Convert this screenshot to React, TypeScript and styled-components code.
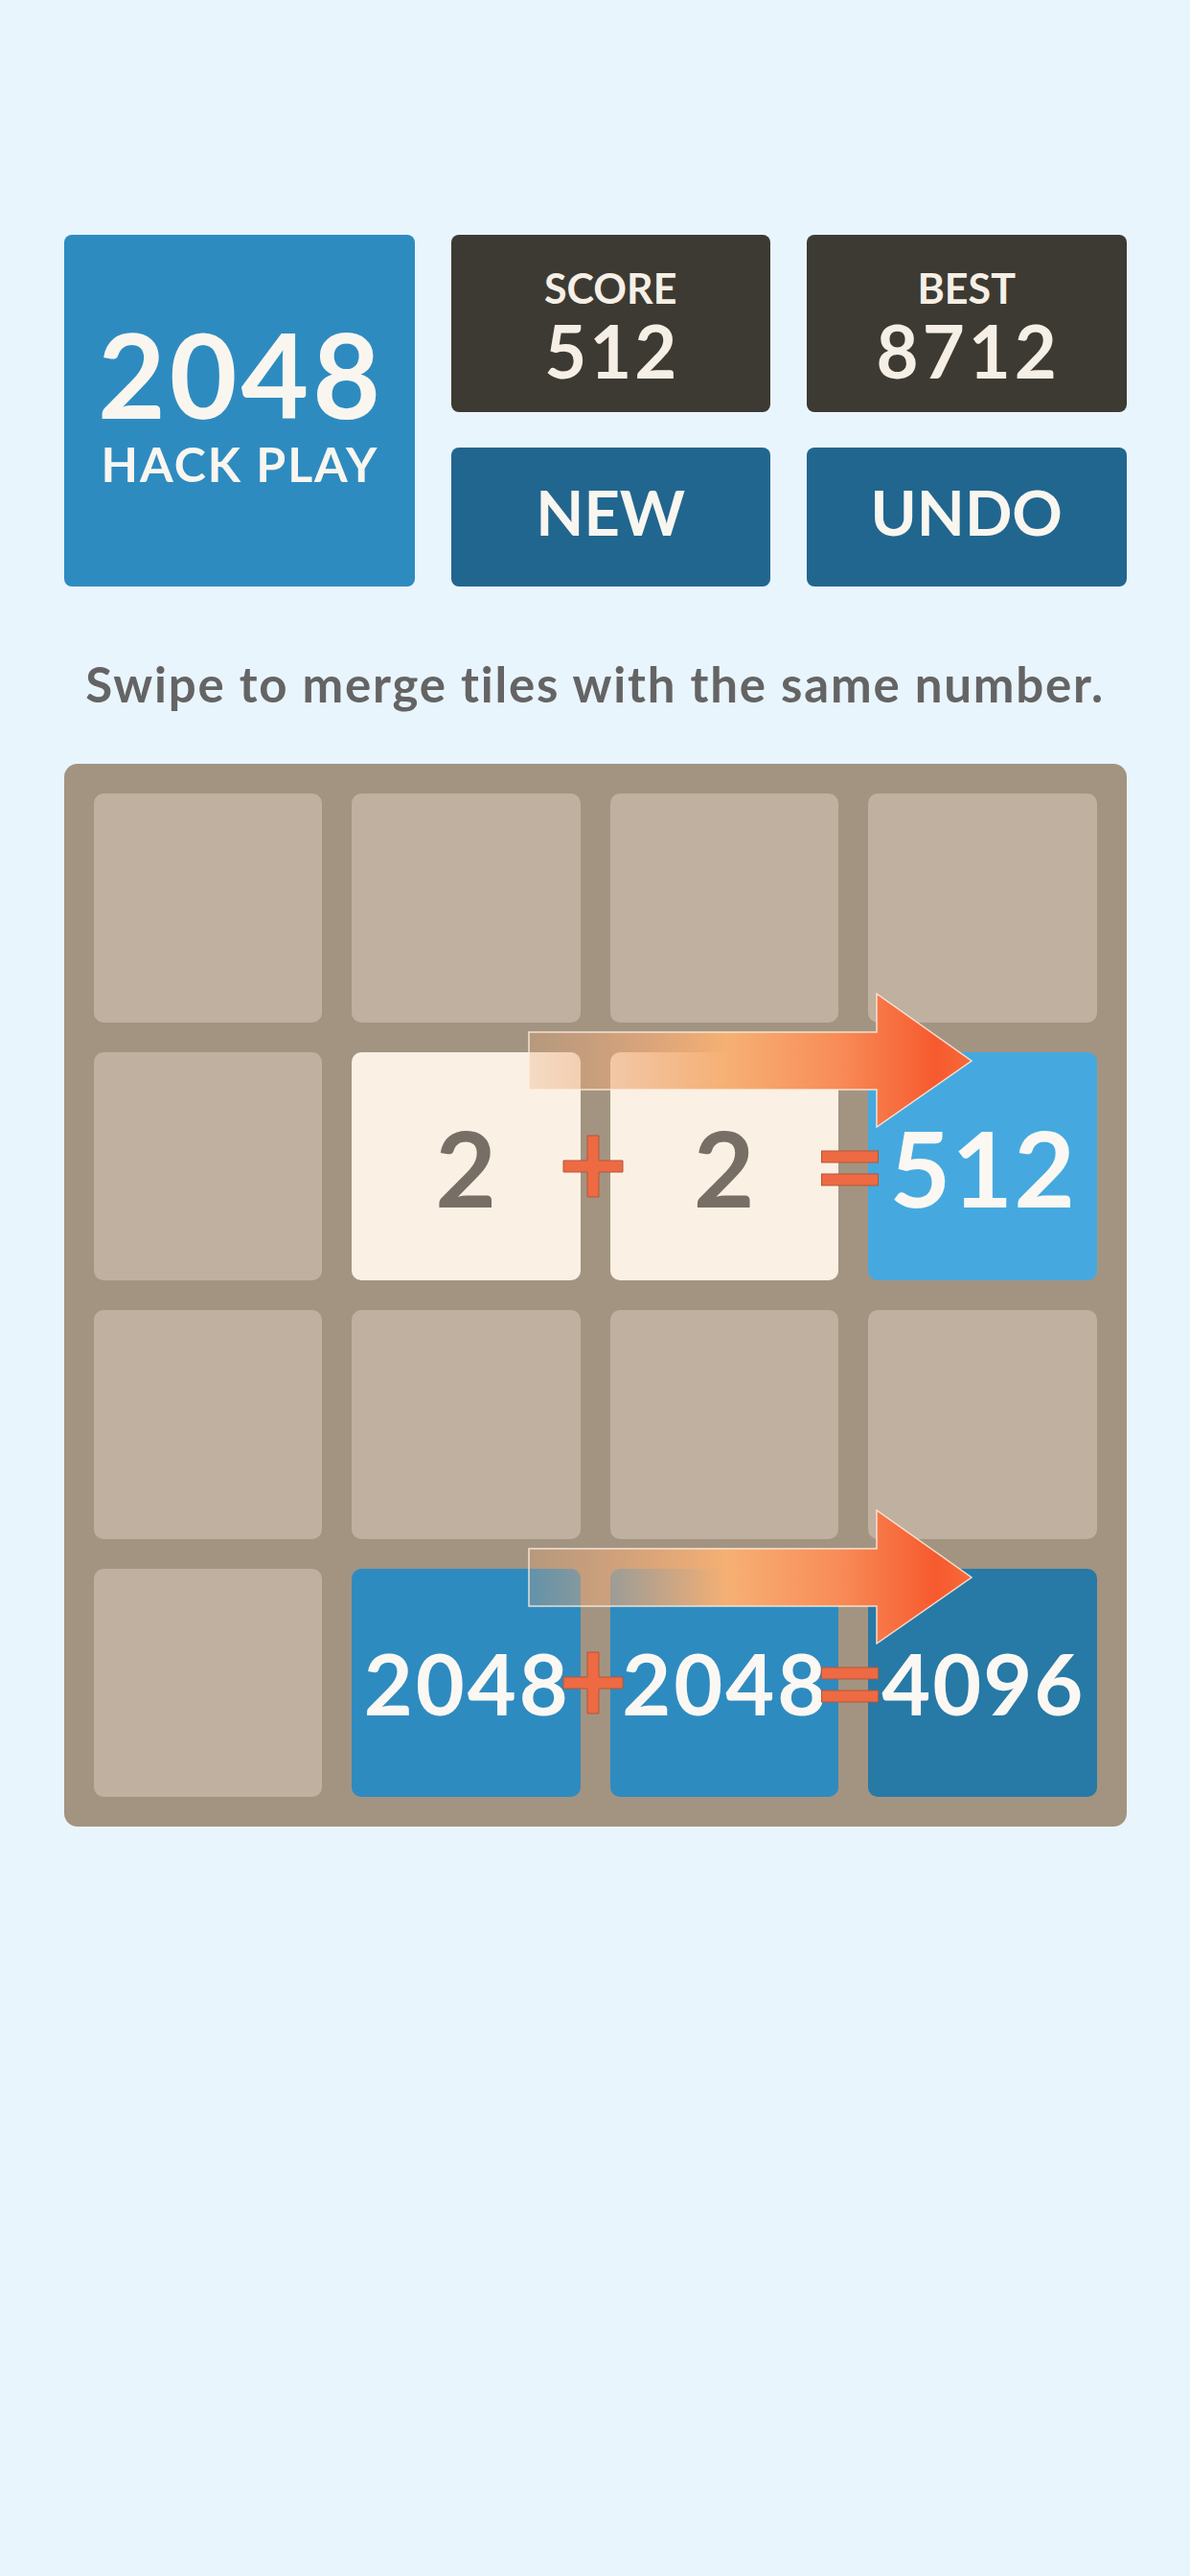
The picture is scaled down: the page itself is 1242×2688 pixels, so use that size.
import React from "react";
import styled, { createGlobalStyle } from "styled-components";

const GlobalStyle = createGlobalStyle`
  html, body {
    margin: 0;
    padding: 0;
    background: #e9f5fd;
  }
  body {
    font-family: Lato, "Open Sans", "Liberation Sans", sans-serif;
    font-weight: 700;
  }
`;

const Page = styled.div`
  width: 1109px;
  margin: 0 auto;
  padding-top: 245px;
  min-height: 2688px;
  box-sizing: border-box;
`;

const Header = styled.div`
  display: grid;
  grid-template-columns: 366px 1fr 1fr;
  grid-template-rows: 185px 145px;
  column-gap: 38px;
  row-gap: 37px;
`;

const Logo = styled.div`
  grid-row: 1 / span 2;
  background: #2e8bc0;
  border-radius: 8px;
  color: #f9f6f0;
  display: flex;
  flex-direction: column;
  align-items: center;
  justify-content: center;
  padding-bottom: 20px;
`;

const Spaced = styled.span<{ $ls: number }>`
  white-space: nowrap;
  letter-spacing: ${(p) => p.$ls}px;
  margin-right: ${(p) => -p.$ls}px;
`;

const LogoNumber = styled.div`
  font-size: 122px;
  line-height: 1;
  white-space: nowrap;
`;

const LogoSub = styled.div`
  font-size: 50px;
  line-height: 1;
  margin-top: 8px;
  white-space: nowrap;
`;

const ScoreBox = styled.div`
  background: #3c3a33;
  border-radius: 8px;
  color: #f6efe6;
  display: flex;
  flex-direction: column;
  align-items: center;
  justify-content: center;
  padding-top: 8px;
`;

const ScoreLabel = styled.div`
  font-size: 43px;
  line-height: 1;
`;

const ScoreValue = styled.div`
  font-size: 76px;
  line-height: 1;
  margin-top: 6px;
  white-space: nowrap;
`;

const ActionButton = styled.button`
  background: #21668f;
  border: none;
  border-radius: 8px;
  color: #f9f6f0;
  font-family: inherit;
  font-weight: 700;
  font-size: 65px;
  line-height: 1;
  padding: 0 0 10px;
  cursor: pointer;
`;

const Hint = styled.p`
  margin: 76px 0 0;
  text-align: center;
  font-size: 51px;
  line-height: 1;
  letter-spacing: 1.8px;
  color: #656465;
  white-space: nowrap;
`;

const Board = styled.div`
  margin-top: 58px;
  background: #a39481;
  border-radius: 14px;
  padding: 31px;
  display: grid;
  grid-template-columns: repeat(4, 1fr);
  grid-auto-rows: 238.5px;
  gap: 31px;
`;

type TileKind = "empty" | "two" | "t512" | "t2048" | "t4096";

const tileBg: Record<TileKind, string> = {
  empty: "#bfb0a0",
  two: "#faf0e4",
  t512: "#45a9df",
  t2048: "#2e8bc0",
  t4096: "#2779a6",
};

const Tile = styled.div<{ $kind: TileKind; $size?: number }>`
  position: relative;
  background: ${(p) => tileBg[p.$kind]};
  border-radius: 10px;
  display: flex;
  align-items: center;
  justify-content: center;
  color: ${(p) => (p.$kind === "two" ? "#776e65" : "#fbf8f3")};
  font-size: ${(p) => p.$size ?? 110}px;
  line-height: 1;
  white-space: nowrap;
`;

const TileText = styled.span<{ $ls: number }>`
  position: relative;
  z-index: 1;
  letter-spacing: ${(p) => p.$ls}px;
  margin-right: ${(p) => -p.$ls}px;
`;

const OpSlot = styled.div<{ $dx: number; $dy: number }>`
  position: absolute;
  z-index: 3;
  left: calc(100% + ${(p) => p.$dx}px);
  top: calc(50% + ${(p) => p.$dy}px);
  transform: translate(-50%, -50%);
  display: flex;
`;

const ArrowSlot = styled.div`
  position: absolute;
  z-index: 2;
  left: 184px;
  top: -62px;
  width: 464px;
  height: 141px;
  pointer-events: none;
`;

const Plus = () => (
  <svg width="64" height="66" viewBox="0 0 64 66">
    <path
      d="M26 1h12v26h25v12H38v26H26V39H1V27h25z"
      fill="#ee6a43"
      stroke="#b4573a"
      strokeWidth="1"
    />
  </svg>
);

const Equals = () => (
  <svg width="61" height="38" viewBox="0 0 61 38">
    <rect x="1" y="1" width="59" height="12" fill="#ee6a43" stroke="#b4573a" strokeWidth="1" />
    <rect x="1" y="25" width="59" height="12" fill="#ee6a43" stroke="#b4573a" strokeWidth="1" />
  </svg>
);

const Arrow = ({ id }: { id: string }) => (
  <svg width="464" height="141" viewBox="-1 -1 464 141">
    <defs>
      <linearGradient id={id} x1="0" y1="0" x2="1" y2="0">
        <stop offset="0" stopColor="#e6a676" stopOpacity="0.28" />
        <stop offset="0.2" stopColor="#eeaa78" stopOpacity="0.6" />
        <stop offset="0.45" stopColor="#f6b073" stopOpacity="1" />
        <stop offset="0.7" stopColor="#f88c58" stopOpacity="1" />
        <stop offset="0.92" stopColor="#f65a2e" stopOpacity="1" />
        <stop offset="1" stopColor="#f86a3a" stopOpacity="1" />
      </linearGradient>
    </defs>
    <polygon
      points="0,40 363,40 363,0 462,70 363,139 363,100 0,100"
      fill={`url(#${id})`}
      stroke="rgba(255,238,225,0.85)"
      strokeWidth="1.5"
    />
  </svg>
);

type Cell = {
  kind: TileKind;
  text?: string;
  size?: number;
  ls?: number;
  op?: "plus" | "equals";
  arrow?: string;
};

const rows: Cell[][] = [
  [{ kind: "empty" }, { kind: "empty" }, { kind: "empty" }, { kind: "empty" }],
  [
    { kind: "empty" },
    { kind: "two", text: "2", op: "plus", arrow: "arrowA" },
    { kind: "two", text: "2", op: "equals" },
    { kind: "t512", text: "512", ls: 1 },
  ],
  [{ kind: "empty" }, { kind: "empty" }, { kind: "empty" }, { kind: "empty" }],
  [
    { kind: "empty" },
    { kind: "t2048", text: "2048", size: 88, ls: 3, op: "plus", arrow: "arrowB" },
    { kind: "t2048", text: "2048", size: 88, ls: 3, op: "equals" },
    { kind: "t4096", text: "4096", size: 88, ls: 2 },
  ],
];

export default function App() {
  return (
    <>
      <GlobalStyle />
      <Page>
        <Header>
          <Logo>
            <LogoNumber>
              <Spaced $ls={4}>2048</Spaced>
            </LogoNumber>
            <LogoSub>
              <Spaced $ls={2}>HACK PLAY</Spaced>
            </LogoSub>
          </Logo>
          <ScoreBox>
            <ScoreLabel>SCORE</ScoreLabel>
            <ScoreValue>
              <Spaced $ls={3}>512</Spaced>
            </ScoreValue>
          </ScoreBox>
          <ScoreBox>
            <ScoreLabel>BEST</ScoreLabel>
            <ScoreValue>
              <Spaced $ls={4}>8712</Spaced>
            </ScoreValue>
          </ScoreBox>
          <ActionButton>NEW</ActionButton>
          <ActionButton>UNDO</ActionButton>
        </Header>
        <Hint>Swipe to merge tiles with the same number.</Hint>
        <Board>
          {rows.map((row, r) =>
            row.map((cell, c) => (
              <Tile key={`${r}-${c}`} $kind={cell.kind} $size={cell.size}>
                {cell.text && <TileText $ls={cell.ls ?? 0}>{cell.text}</TileText>}
                {cell.op === "plus" && (
                  <OpSlot $dx={13} $dy={0}>
                    <Plus />
                  </OpSlot>
                )}
                {cell.op === "equals" && (
                  <OpSlot $dx={12} $dy={2}>
                    <Equals />
                  </OpSlot>
                )}
                {cell.arrow && (
                  <ArrowSlot>
                    <Arrow id={cell.arrow} />
                  </ArrowSlot>
                )}
              </Tile>
            ))
          )}
        </Board>
      </Page>
    </>
  );
}
